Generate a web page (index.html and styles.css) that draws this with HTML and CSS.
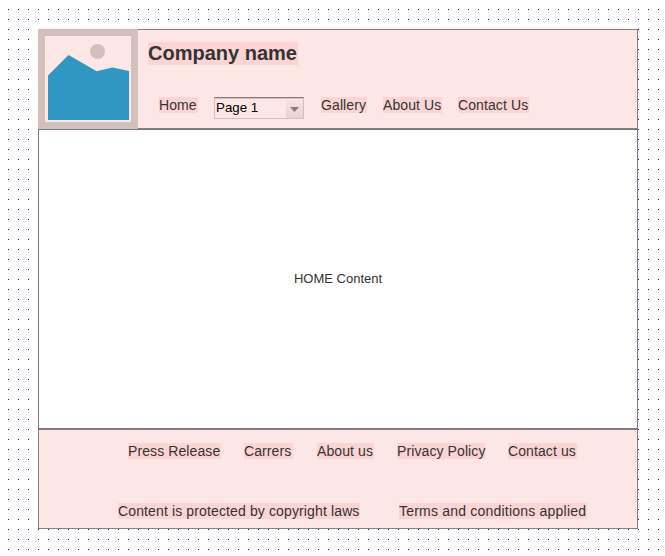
FILE: index.html
```html
<!DOCTYPE html>
<html lang="en">
<head>
<meta charset="utf-8">
<title>Company name</title>
<link rel="stylesheet" href="styles.css">
</head>
<body>
<div class="wireframe">
  <header class="band header">
    <svg class="logo" width="100" height="100" viewBox="0 0 100 100" aria-hidden="true">
      <rect width="100" height="100" fill="#d4bfbe"/>
      <rect x="7" y="7" width="86" height="86" fill="#fde7e6"/>
      <circle cx="59.5" cy="22.5" r="7.5" fill="#d4bfbe"/>
      <path d="M10 46.5 30.5 26 58.7 42.3 74.5 38.5 91 42V91H10Z" fill="#2e97c2"/>
    </svg>
    <div class="heading">
      <h1 class="title">Company name</h1>
      <nav class="menu">
        <a class="label home">Home</a>
        <div class="select"><span class="value">Page 1</span><span class="arrow"><svg width="9" height="5" viewBox="0 0 9 5"><path d="M0 0H9L4.5 5Z" fill="#8f7b7a"/></svg></span></div>
        <a class="label gallery">Gallery</a>
        <a class="label about">About Us</a>
        <a class="label contact">Contact Us</a>
      </nav>
    </div>
  </header>
  <main class="content">HOME Content</main>
  <footer class="band footer">
    <nav class="links">
      <a class="label press">Press Release</a>
      <a class="label careers">Carrers</a>
      <a class="label about-us">About us</a>
      <a class="label privacy">Privacy Policy</a>
      <a class="label contact-us">Contact us</a>
    </nav>
    <div class="legal">
      <span class="label copyright">Content is protected by copyright laws</span>
      <span class="label terms">Terms and conditions applied</span>
    </div>
  </footer>
</div>
</body>
</html>
```
FILE: styles.css
```css
* { box-sizing: border-box; }
html { height: 100%; }
body {
  margin: 0;
  height: 556px;
  padding: 29px 0 0 38px;
  overflow: hidden;
  font-family: "Liberation Sans", Arial, sans-serif;
  font-size: 14px;
  color: #333;
  background:
    url("data:image/svg+xml,%3Csvg xmlns='http://www.w3.org/2000/svg' width='10' height='10'%3E%3Crect x='8' y='9' width='1' height='1' fill='%231414d2'/%3E%3C/svg%3E") 0 0 / 10px 10px,
    linear-gradient(#fff 530px, #fbfbfb 556px);
}
.wireframe { width: 600px; }
.band { height: 100px; border: 1px solid #8f7b7a; background: #fde7e6; }
.header { display: flex; }
.logo { display: block; flex: none; margin: -1px 0 0 -1px; }
.heading { padding: 12px 0 0 10px; }
.title {
  width: 150px;
  height: 23px;
  margin: 0;
  font-size: 20px;
  line-height: 23px;
  white-space: nowrap;
  background: #fbd5d3;
}
.menu { display: flex; margin: 32px 0 0 11px; }
.label {
  flex: none;
  height: 16px;
  line-height: 16px;
  letter-spacing: 0.1px;
  white-space: nowrap;
  background: #fbd5d3;
}
.home { width: 39px; }
.select {
  display: flex;
  width: 90px;
  height: 22px;
  margin: 0 17px 0 16px;
  border: 1px solid #d4bfbe;
  border-top-color: #8f7b7a;
  box-shadow: inset 0 1px #d4bfbe;
  color: #000;
}
.value { width: 71px; padding-left: 1px; font-size: 13.33px; line-height: 20px; }
.arrow {
  display: flex;
  width: 17px;
  height: 18px;
  margin-top: 2px;
  padding-top: 1px;
  align-items: center;
  justify-content: center;
  background: linear-gradient(#f8e2e1, #e9d3d2);
}
.gallery { width: 46px; margin-right: 16px; }
.about { width: 59px; margin-right: 16px; }
.contact { width: 71px; }
.content {
  display: flex;
  height: 300px;
  padding-bottom: 2px;
  align-items: center;
  justify-content: center;
  border: 1px solid #797979;
  background: #fff;
  font-size: 13px;
}
.footer { padding-top: 13px; }
.links { display: flex; margin-left: 89px; }
.press { width: 93px; margin-right: 23px; }
.careers { width: 49px; margin-right: 24px; }
.about-us { width: 57px; margin-right: 23px; }
.privacy { width: 88px; margin-right: 23px; }
.contact-us { width: 69px; }
.legal { display: flex; margin: 44px 0 0 79px; }
.copyright { width: 242px; margin-right: 39px; letter-spacing: 0.13px; }
.terms { width: 188px; letter-spacing: 0.21px; }
```
